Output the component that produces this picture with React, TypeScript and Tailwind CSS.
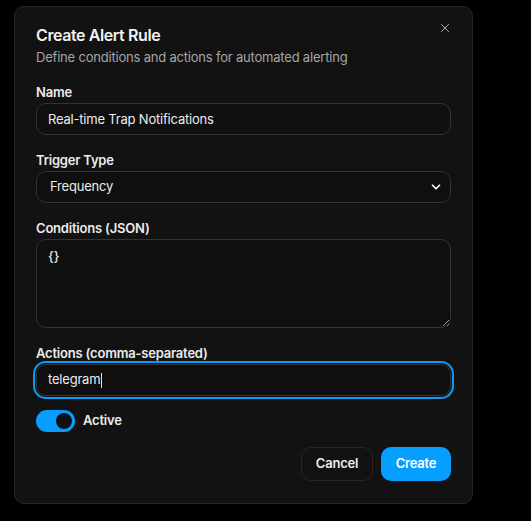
import { X, ChevronDown } from "lucide-react";

function Label({ children }: { children: React.ReactNode }) {
  return <label className="block text-[13px] leading-5 font-semibold tracking-[-0.2px] text-[#ececec] mb-[1px]">{children}</label>;
}

export default function App() {
  return (
    <div className="min-h-screen w-full bg-black font-['Inter','Liberation_Sans',sans-serif] pt-[6px] pl-[14px]">
      <div className="relative w-[459px] rounded-[10px] border border-[#262626] bg-[#121212] px-[21px] pt-[16px] pb-[22px] text-white">
        <button className="absolute right-[20px] top-[14px] text-[#bdbdbd]">
          <X size={14} strokeWidth={1.6} />
        </button>
        <h2 className="text-[16px] leading-6 font-semibold tracking-[-0.4px] text-[#f2f2f2]">Create Alert Rule</h2>
        <p className="text-[13px] leading-5 tracking-[-0.2px] text-[#a6a6a6]">Define conditions and actions for automated alerting</p>

        <div className="mt-[15px]">
          <Label>Name</Label>
          <input
            readOnly
            value="Real-time Trap Notifications"
            className="block h-[32px] w-full rounded-[10px] border border-[#333] bg-[#0f0f0f] px-[11px] text-[13px] tracking-[-0.2px] text-[#ececec] outline-none"
          />
        </div>

        <div className="mt-[15px]">
          <Label>Trigger Type</Label>
          <div className="relative h-[32px] w-full rounded-[10px] border border-[#333] bg-[#0f0f0f] flex items-center px-[13px] text-[13px] tracking-[-0.2px] text-[#ececec]">
            Frequency
            <ChevronDown size={14} strokeWidth={3} className="absolute right-[7px] top-[8px] text-white" />
          </div>
        </div>

        <div className="mt-[15px]">
          <Label>Conditions (JSON)</Label>
          <textarea
            readOnly
            value="{}"
            className="block h-[89px] w-full rounded-[10px] border border-[#333] bg-[#0f0f0f] px-[11px] py-[7px] text-[13px] font-medium text-[#ececec] outline-none font-['Inter','Liberation_Sans',sans-serif]"
          />
        </div>

        <div className="mt-[15px]">
          <Label>Actions (comma-separated)</Label>
          <div className="flex h-[32px] w-full items-center rounded-[10px] border border-[#333] bg-[#0f0f0f] px-[11px] text-[13px] tracking-[-0.2px] text-[#ececec] ring-2 ring-[#0a9bf2] ring-offset-1 ring-offset-[#121212]">
            telegram<span className="ml-[1px] inline-block h-[15px] w-[1px] bg-[#ddd]" />
          </div>
        </div>

        <div className="mt-[14px] flex items-center gap-[8px]">
          <div className="flex h-[22px] w-[39px] items-center justify-end rounded-full bg-[#089cff] px-[1px]">
            <div className="h-[20px] w-[20px] rounded-full border-2 border-[#089cff] bg-[#111]" />
          </div>
          <span className="text-[13px] font-semibold tracking-[-0.2px] text-[#ececec]">Active</span>
        </div>

        <div className="mt-[15px] flex justify-end gap-[8px]">
          <button className="h-[34px] w-[72px] rounded-[10px] border border-[#262626] bg-[#121212] text-[13px] font-semibold tracking-[-0.2px] text-[#ececec]">Cancel</button>
          <button className="h-[34px] w-[70px] rounded-[10px] bg-[#069fff] text-[13px] font-semibold tracking-[-0.2px] text-white">Create</button>
        </div>
      </div>
    </div>
  );
}
